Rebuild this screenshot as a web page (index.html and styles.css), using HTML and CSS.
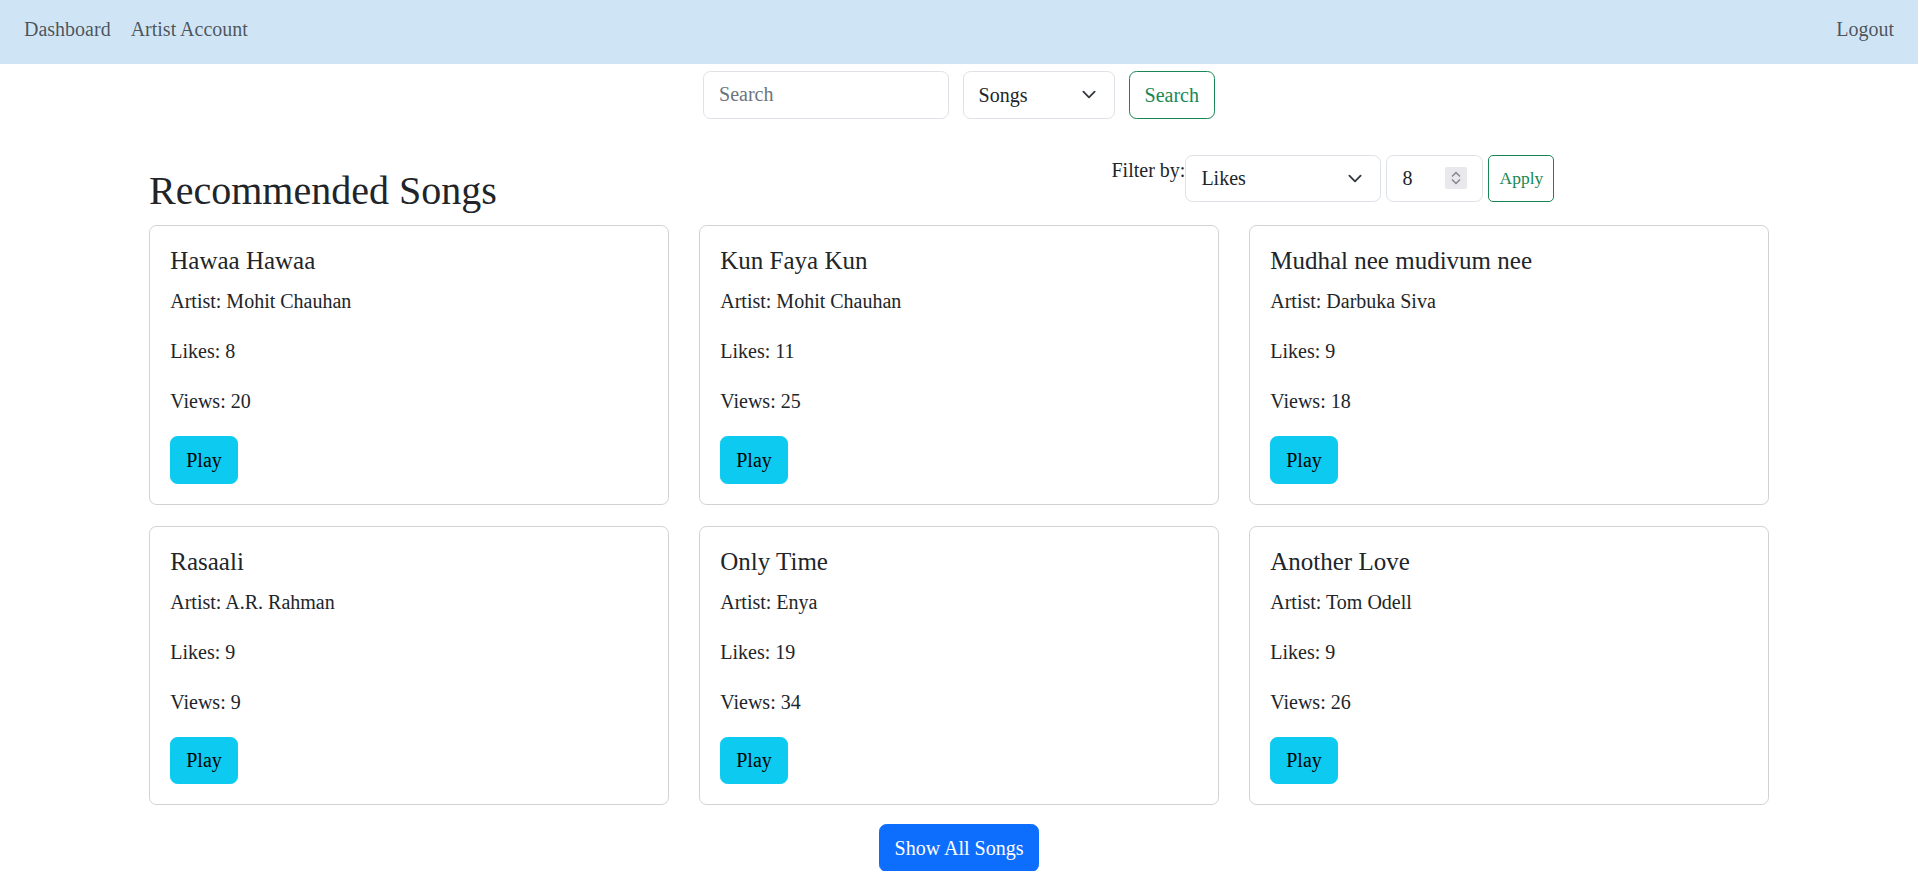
FILE: index.html
```html
<!DOCTYPE html>
<html lang="en">
<head>
<meta charset="utf-8">
<title>Recommended Songs</title>
<link rel="stylesheet" href="styles.css">
</head>
<body>
<nav class="navbar">
  <div class="nav-left">
    <a class="nav-link" href="#">Dashboard</a>
    <a class="nav-link" href="#">Artist Account</a>
  </div>
  <a class="nav-link" href="#">Logout</a>
</nav>

<form class="search-form">
  <input class="form-control search-input" type="text" placeholder="Search">
  <div class="form-select search-select">
    <span>Songs</span>
    <svg class="chev" viewBox="0 0 16 16" width="20" height="15"><path d="m2 5 6 6 6-6" fill="none" stroke="#343a40" stroke-width="2" stroke-linecap="round" stroke-linejoin="round"/></svg>
  </div>
  <button class="btn btn-outline-success" type="button">Search</button>
</form>

<main class="container">
  <div class="heading-row">
    <h2 class="page-title">Recommended Songs</h2>
    <div class="filter-form">
      <span class="filter-label">Filter by:</span>
      <div class="form-select filter-select">
        <span>Likes</span>
        <svg class="chev" viewBox="0 0 16 16" width="20" height="15"><path d="m2 5 6 6 6-6" fill="none" stroke="#343a40" stroke-width="2" stroke-linecap="round" stroke-linejoin="round"/></svg>
      </div>
      <div class="form-control num-input">
        <span>8</span>
        <span class="spin"><svg viewBox="0 0 22 22" width="22" height="22"><path d="M7 9.5 11 5.5l4 4M7 12.5 11 16.5l4-4" fill="none" stroke="#85858c" stroke-width="1.5"/></svg></span>
      </div>
      <button class="btn btn-sm btn-outline-success" type="button">Apply</button>
    </div>
  </div>

  <div class="card-grid">
    <div class="card">
      <h5 class="card-title">Hawaa Hawaa</h5>
      <p class="card-text">Artist: Mohit Chauhan</p>
      <p class="card-text">Likes: 8</p>
      <p class="card-text">Views: 20</p>
      <button class="btn btn-info" type="button">Play</button>
    </div>
    <div class="card">
      <h5 class="card-title">Kun Faya Kun</h5>
      <p class="card-text">Artist: Mohit Chauhan</p>
      <p class="card-text">Likes: 11</p>
      <p class="card-text">Views: 25</p>
      <button class="btn btn-info" type="button">Play</button>
    </div>
    <div class="card">
      <h5 class="card-title">Mudhal nee mudivum nee</h5>
      <p class="card-text">Artist: Darbuka Siva</p>
      <p class="card-text">Likes: 9</p>
      <p class="card-text">Views: 18</p>
      <button class="btn btn-info" type="button">Play</button>
    </div>
    <div class="card">
      <h5 class="card-title">Rasaali</h5>
      <p class="card-text">Artist: A.R. Rahman</p>
      <p class="card-text">Likes: 9</p>
      <p class="card-text">Views: 9</p>
      <button class="btn btn-info" type="button">Play</button>
    </div>
    <div class="card">
      <h5 class="card-title">Only Time</h5>
      <p class="card-text">Artist: Enya</p>
      <p class="card-text">Likes: 19</p>
      <p class="card-text">Views: 34</p>
      <button class="btn btn-info" type="button">Play</button>
    </div>
    <div class="card">
      <h5 class="card-title">Another Love</h5>
      <p class="card-text">Artist: Tom Odell</p>
      <p class="card-text">Likes: 9</p>
      <p class="card-text">Views: 26</p>
      <button class="btn btn-info" type="button">Play</button>
    </div>
  </div>

  <div class="show-all">
    <button class="btn btn-primary" type="button">Show All Songs</button>
  </div>
</main>
</body>
</html>
```

FILE: styles.css
```css
html {
  scrollbar-width: none;
}

*, *::before, *::after {
  box-sizing: border-box;
}

body {
  margin: 0;
  font-family: "Liberation Serif", "Times New Roman", serif;
  font-size: 20px;
  line-height: 1.5;
  color: #212529;
  background: #fff;
}

/* Navbar */
.navbar {
  height: 64px;
  padding: 14px 24px 0;
  background: #cfe4f5;
  display: flex;
  justify-content: space-between;
  align-items: flex-start;
}

.nav-left {
  display: flex;
  gap: 20px;
}

.nav-link {
  color: rgba(0, 0, 0, 0.65);
  text-decoration: none;
  line-height: 30px;
}

/* Form controls */
.form-control,
.form-select {
  height: 47.5px;
  font-family: inherit;
  font-size: 20px;
  line-height: 30px;
  color: #212529;
  background: #fff;
  border: 1px solid #dee2e6;
  border-radius: 7.5px;
  padding: 7.75px 15px;
}

.form-control::placeholder {
  color: #6c757d;
}

.form-select {
  display: flex;
  align-items: center;
  justify-content: space-between;
}

.chev {
  display: block;
  flex: none;
}

.btn {
  font-family: inherit;
  font-size: 20px;
  line-height: 30px;
  padding: 7.75px 15px;
  border: 1px solid transparent;
  border-radius: 7.5px;
  background: transparent;
  cursor: pointer;
}

.btn-sm {
  font-size: 17.5px;
  line-height: 26px;
  padding: 5px 10px;
  border-radius: 5px;
}

.btn-outline-success {
  color: #198754;
  border-color: #198754;
}

.btn-info {
  background: #0dcaf0;
  border-color: #0dcaf0;
  color: #000;
}

.btn-primary {
  background: #0d6efd;
  border-color: #0d6efd;
  color: #fff;
}

/* Search form */
.search-form {
  margin: 7px 0 0;
  display: flex;
  justify-content: center;
  gap: 13.5px;
}

.search-input {
  width: 246px;
}

.search-select {
  width: 152.5px;
}

/* Container */
.container {
  width: 1620px;
  margin: 0 auto;
}

.heading-row {
  margin-top: 36px;
  display: grid;
  grid-template-columns: 932.5px 1fr;
  column-gap: 30px;
  align-items: start;
}

.page-title {
  margin: 12.5px 0 10px;
  font-size: 40px;
  line-height: 48px;
  font-weight: normal;
}

.filter-form {
  display: flex;
  align-items: stretch;
}

.filter-label {
  align-self: flex-start;
  line-height: 30px;
}

.filter-select {
  width: 196px;
  margin-right: 5px;
}

.num-input {
  width: 97px;
  margin-right: 5px;
  display: flex;
  align-items: center;
  justify-content: space-between;
}

.spin {
  display: block;
  width: 22px;
  height: 22px;
  background: #e9e9ed;
  border-radius: 2px;
}

.spin svg {
  display: block;
}

.filter-form .btn-sm {
  width: 66px;
  padding: 0;
}

/* Cards */
.card-grid {
  display: grid;
  grid-template-columns: repeat(3, 1fr);
  column-gap: 30px;
  row-gap: 21px;
}

.card {
  border: 1px solid rgba(0, 0, 0, 0.175);
  border-radius: 7.5px;
  padding: 20px 20.25px;
}

.card-title {
  margin: 0 0 10px;
  font-size: 25px;
  line-height: 30px;
  font-weight: normal;
}

.card-text {
  margin: 0 0 20px;
}

.show-all {
  margin-top: 19px;
  display: flex;
  justify-content: center;
}
```
